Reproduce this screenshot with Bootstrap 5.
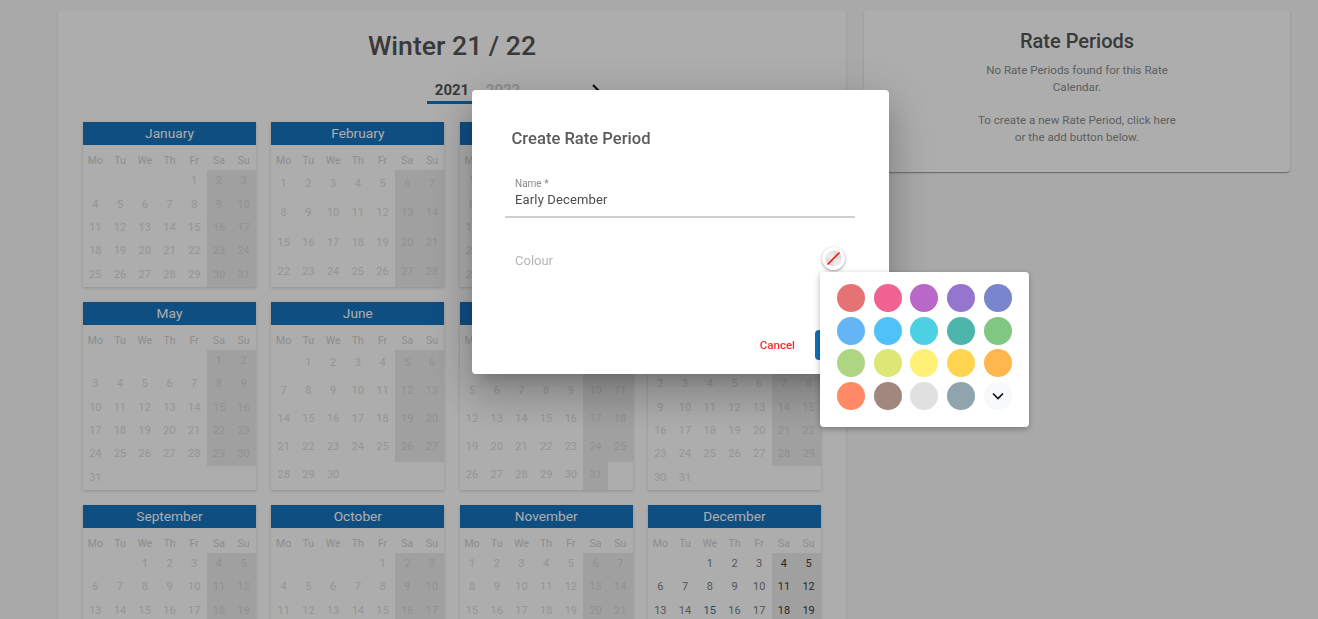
<!DOCTYPE html>
<html lang="en">
<head>
<meta charset="utf-8">
<title>Rate Calendar</title>
<link href="https://cdn.jsdelivr.net/npm/bootstrap@5.3.0/dist/css/bootstrap.min.css" rel="stylesheet">
<style>
html,body{height:100%;overflow:hidden}
body{background:#fafafa;font-family:Roboto,"Liberation Sans",sans-serif;color:#3a3a3a}
.page-wrap{padding:10px 28px 0 58px;gap:18px;height:619px;overflow:hidden}
.panel{background:#fff;border-radius:4px;box-shadow:0 2px 1px -1px rgba(0,0,0,.2),0 1px 1px 0 rgba(0,0,0,.14),0 1px 3px 0 rgba(0,0,0,.12)}
.panel-main{width:788px;flex:none;padding:0 25px;height:800px}
.panel-side{width:426px;height:162px;flex:none;text-align:center}
.cal-title{font-size:26.6px;font-weight:500;line-height:30px;margin:21px 0 0;text-align:center;color:#555}
.year-strip{height:30px;margin:13px 0 18px;padding-left:344px;position:relative}
.year-tab{width:50px;height:30px;font-size:15px;font-weight:700;line-height:20px;padding-top:6px;text-align:center;color:#d0d0d0;margin-right:1px}
.year-tab.current{color:#555;border-bottom:3px solid #1673bf}
.year-next{position:absolute;left:507px;top:8px}
.months{display:grid;grid-template-columns:repeat(4,173px);column-gap:15.33px;row-gap:15px}
.month{display:flex;flex-direction:column;background:#fff;box-shadow:0 1px 3px rgba(0,0,0,.18)}
.month-head{background:#1673bf;color:#fff;font-size:13.7px;font-weight:400;line-height:23px;height:23px;text-align:center}
.week-head,.week-days{display:grid;grid-template-columns:repeat(7,1fr);text-align:center}
.week-head{height:25px;padding-top:7px;line-height:18px;font-size:10.5px;font-weight:400;color:#d0d0d0}
.week-days{flex:1;grid-auto-rows:1fr;font-size:11px;color:#dcdcdc}
.week-days>span{display:flex;align-items:center;justify-content:center;min-height:23.33px}
.week-days>.wknd{background:#ececec;color:#d6d6d6}
.week-days>.live{color:#808080}
.week-days>.wknd.live{color:#3c3c3c}
.week-days>.today{color:#2f6f9f}
.side-title{font-size:20px;font-weight:500;line-height:24px;margin:19px 0 9px;color:#555}
.side-text{font-size:11.6px;line-height:16.7px;width:210px;margin:0 auto;color:#8c8c8c}
.scrim{position:fixed;inset:0;background:rgba(0,0,0,.32)}
.dialog-box{position:fixed;left:472px;top:90px;width:417px;height:284px;background:#fff;border-radius:4px;padding:39px 34px 14px 33px;box-shadow:0 11px 15px -7px rgba(0,0,0,.2),0 24px 38px 3px rgba(0,0,0,.14),0 9px 46px 8px rgba(0,0,0,.12)}
.dialog-title{font-size:16.6px;font-weight:500;line-height:20px;color:#5a5a5a;margin:0 0 0 6.5px}
.name-field{border-bottom:2px solid #cfcfcf;padding:0 10px 7px;margin-top:29px}
.name-label{font-size:10px;line-height:12px;color:#8a8a8a;display:block}
.name-value{font-size:13px;line-height:18px;color:#4c4c4c;letter-spacing:.15px;display:block;margin-top:1px}
.colour-row{padding:0 0 0 10px;margin-top:30px;height:24px;position:relative}
.colour-label{font-size:13px;color:#b5b5b5;line-height:24px}
.swatch-btn{position:absolute;left:317px;top:-1px;width:23px;height:23px;border-radius:50%;background:#fff;box-shadow:0 1px 3px rgba(0,0,0,.4);padding:0;border:0;display:flex;align-items:center;justify-content:center}
.dialog-actions{margin-top:auto;gap:20px}
.cancel-link{font-size:11.5px;font-weight:500;color:#ff2a2a;line-height:30px}
.save-btn{width:40px;height:30px;background:#1170b8;border-radius:4px;border:0;padding:0}
.palette{position:fixed;left:820px;top:272px;width:209px;height:155px;background:#fff;border-radius:4px;padding:12px 0 0 17px;box-shadow:0 2px 6px rgba(0,0,0,.3);display:grid;grid-template-columns:repeat(5,28px);grid-auto-rows:28px;column-gap:8.7px;row-gap:4.67px}
.dot{width:28px;height:28px;border-radius:50%;display:flex;align-items:center;justify-content:center}
</style>
</head>
<body>
<div class="page-wrap d-flex align-items-start">
  <section class="panel panel-main">
    <h1 class="cal-title">Winter 21 / 22</h1>
    <div class="year-strip d-flex">
      <div class="year-tab current">2021</div>
      <div class="year-tab">2022</div>
      <svg class="year-next" width="14" height="20" viewBox="0 0 14 20"><path d="M3 3l7 7-7 7" fill="none" stroke="#000" stroke-width="2"/></svg>
    </div>
    <div class="months" id="months"></div>
  </section>
  <aside class="panel panel-side">
    <h2 class="side-title">Rate Periods</h2>
    <p class="side-text mb-0">No Rate Periods found for this Rate Calendar.<br><br>To create a new Rate Period, click here or the add button below.</p>
  </aside>
</div>
<div class="scrim"></div>
<div class="dialog-box d-flex flex-column">
  <h3 class="dialog-title">Create Rate Period</h3>
  <div class="name-field">
    <span class="name-label">Name *</span>
    <span class="name-value">Early December</span>
  </div>
  <div class="colour-row">
    <span class="colour-label">Colour</span>
    <button class="swatch-btn" type="button" aria-label="No colour">
      <svg width="17" height="17" viewBox="0 0 17 17"><circle cx="8.5" cy="8.5" r="8" fill="#ebebeb"/><path d="M8.5 .5a8 8 0 0 1 8 8h-8zM8.5 16.5a8 8 0 0 1-8-8h8z" fill="#dcdcdc"/><path d="M2.5 14.5l12-12" stroke="#ff0000" stroke-width="1.4"/></svg>
    </button>
  </div>
  <div class="dialog-actions d-flex justify-content-end align-items-center">
    <span class="cancel-link">Cancel</span>
    <button class="save-btn" type="button" aria-label="Save"></button>
  </div>
</div>
<div class="palette" id="palette"></div>
<script>
var names=['January','February','March','April','May','June','July','August','September','October','November','December'];
var heads=['Mo','Tu','We','Th','Fr','Sa','Su'];
var html='';
names.forEach(function(n,m){
  var first=(new Date(2021,m,1).getDay()+6)%7, len=new Date(2021,m+1,0).getDate(), cells='';
  for(var i=0;i<first;i++)cells+='<span></span>';
  for(var d=1;d<=len;d++){
    var c=[],col=(first+d-1)%7;
    if(col>4)c.push('wknd');
    if(m==11)c.push('live');
    if(m==11&&d==15)c.push('today');
    cells+='<span class="'+c.join(' ')+'">'+d+'</span>';
  }
  html+='<div class="month"><div class="month-head">'+n+'</div><div class="week-head">'+heads.map(function(h){return '<span>'+h+'</span>'}).join('')+'</div><div class="week-days">'+cells+'</div></div>';
});
document.getElementById('months').innerHTML=html;
var cols=['#e57373','#f06292','#ba68c8','#9575cd','#7986cb','#64b5f6','#4fc3f7','#4dd0e1','#4db6ac','#81c784','#aed581','#dce775','#fff176','#ffd54f','#ffb74d','#ff8a65','#a1887f','#e0e0e0','#90a4ae'];
var p=cols.map(function(c){return '<div class="dot" style="background:'+c+'"></div>'}).join('');
p+='<div class="dot bg-light"><svg width="12" height="8" viewBox="0 0 12 8"><path d="M1 1.5l5 5 5-5" fill="none" stroke="#111" stroke-width="1.7"/></svg></div>';
document.getElementById('palette').innerHTML=p;
</script>
<script src="https://cdn.jsdelivr.net/npm/bootstrap@5.3.0/dist/js/bootstrap.bundle.min.js"></script>
</body>
</html>
